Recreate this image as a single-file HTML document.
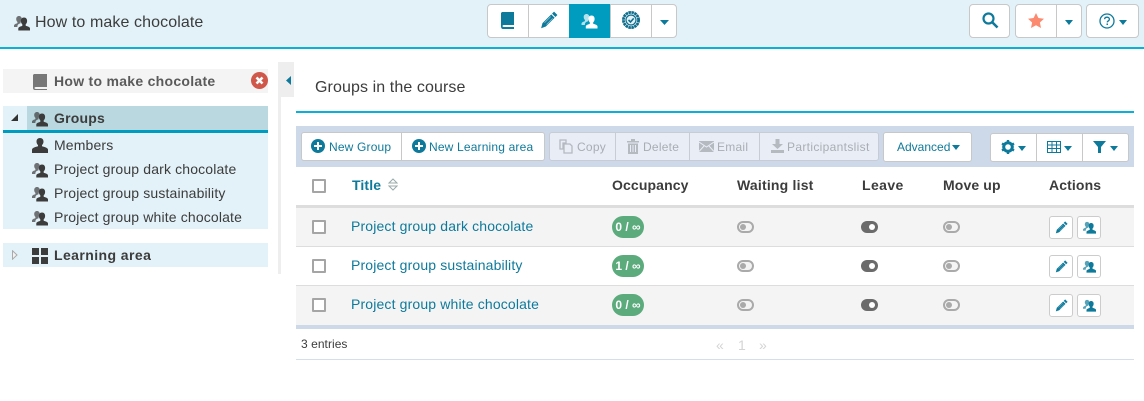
<!DOCTYPE html>
<html><head><meta charset="utf-8"><style>
html,body{margin:0;padding:0;background:#fff}
#p{position:relative;width:1144px;height:401px;overflow:hidden;font-family:"Liberation Sans",sans-serif;color:#3c3c3c;background:#fff}
#p div,#p span.a,#p svg{position:absolute}
.t{white-space:nowrap;line-height:16px}
.btn{background:#fff;border:1px solid #c8c8c8;box-sizing:border-box}
.dis{background:#e9edf6;border:1px solid #c8ccd4;box-sizing:border-box}
.l{color:#0e7a9b}
.tb{font-size:12px;color:#0e7a9b;letter-spacing:.17px}
.td{font-size:12px;color:#a9adb3;letter-spacing:.25px}
.h{font-size:14px;font-weight:bold;letter-spacing:.12px}
.s{font-size:14px;color:#3c3c3c;letter-spacing:.15px}
.r{font-size:14px;color:#0e7a9b;letter-spacing:.15px}
.cb{width:14px;height:14px;box-sizing:border-box;border:2px solid #a5a5a5;background:#fff;border-radius:1px}
.pill{width:32px;height:22px;border-radius:11px;background:#5cab7d;color:#fff;font-size:12px;font-weight:bold;text-align:center;line-height:23px}
.to{width:17px;height:12px;box-sizing:border-box;border:2px solid #aaa;border-radius:6px;background:#f4f4f4}
.to:after{content:"";position:absolute;left:1px;top:1px;width:6px;height:6px;border-radius:50%;background:#aaa}
.on{width:17px;height:12px;border-radius:6px;background:#6b6b6b}
.on:after{content:"";position:absolute;left:8px;top:3px;width:6px;height:6px;border-radius:50%;background:#fff}
.ab{width:24px;height:23px;box-sizing:border-box;border:1px solid #ccc;border-radius:3px;background:#fff}
</style></head><body><div id="p">
<svg width="0" height="0" style="position:absolute"><defs>
<symbol id="grp" viewBox="0 0 16 16"><path d="M5 1c1.700 0 2.800 1.200 2.800 3 0 1.300-.5 2.300-1.200 2.900v1.300c-1.500.4-2.600 1-3 2.100L3.300 12H0v-1.500C.3 9.200 2 8.700 3.400 8.100V6.900C2.700 6.300 2.200 5.300 2.200 4 2.200 2.200 3.300 1 5 1z" opacity=".7"/><path d="M10 2.500c2 0 3.100 1.400 3.100 3.400 0 1.500-.5 2.700-1.400 3.400v1.500c1.500.6 3.800 1 4.300 2.400V15.500H4.300V13.300c.4-1.400 2.500-1.800 4-2.400V9.300C7.400 8.600 6.900 7.400 6.900 5.900 6.900 3.900 8 2.500 10 2.500z"/></symbol>
<symbol id="pen" viewBox="0 0 16 16"><path d="M12.500 .5l3 3-1.800 1.800-3-3zM10 3l3 3-7.800 7.800L1 15.300l1.200-4.500z"/><path d="M4 10.500l5.500-5.500M5.800 12l5.500-5.500" stroke="#fff" stroke-width=".6" opacity=".6"/></symbol>
<symbol id="plus" viewBox="0 0 14 14"><circle cx="7" cy="7" r="7"/><path d="M6 3h2v3h3v2H8v3H6V8H3V6h3z" fill="#fff"/></symbol>
</defs></svg>

<!-- header -->
<div style="left:0;top:0;width:1144px;height:47px;background:#e3f2f8"></div>
<div style="left:0;top:47px;width:1144px;height:2px;background:#0ab0d8"></div>
<svg style="left:14px;top:15px" width="16" height="16" fill="#3c3c3c"><use href="#grp"/></svg>
<div class="t" style="left:35px;top:15px;font-size:16px;letter-spacing:.1px">How to make chocolate</div>

<div class="btn" style="left:487px;top:4px;width:190px;height:34px;border-radius:4px"></div>
<div style="left:528px;top:5px;width:1px;height:32px;background:#c8c8c8"></div>
<div style="left:651px;top:5px;width:1px;height:32px;background:#c8c8c8"></div>
<div style="left:610px;top:5px;width:1px;height:32px;background:#c8c8c8"></div>
<div style="left:569px;top:4px;width:41px;height:34px;background:#009cc0"></div>
<svg style="left:501px;top:12px" width="14" height="17"><path d="M1 0h12v13H3c-1 0-1.500.5-1.500 1s.5 1 1.500 1h10v2H2c-1.200 0-2-1-2-2.500V1z" fill="#0e7a9b"/></svg>
<svg style="left:540px;top:11px" width="18" height="18" fill="#0e7a9b"><use href="#pen"/></svg>
<svg style="left:581px;top:13px" width="17" height="16" fill="#fff"><use href="#grp"/></svg>
<svg style="left:622px;top:11px" width="18" height="18"><circle cx="9" cy="9" r="7.600" fill="none" stroke="#0e6d8c" stroke-width="2.800" stroke-dasharray="2.500 .5"/><circle cx="9" cy="9" r="5" fill="#e3f2f8" stroke="#0e6d8c" stroke-width="1.200"/><path d="M6.500 9l2 2 3.200-3.600" fill="none" stroke="#0e6d8c" stroke-width="1.600"/></svg>
<svg style="left:660px;top:20px" width="9" height="5"><path d="M0 0h9L4.500 5z" fill="#0e7a9b"/></svg>

<div class="btn" style="left:969px;top:4px;width:41px;height:34px;border-radius:4px"></div>
<svg style="left:982px;top:12px" width="17" height="17"><circle cx="6.500" cy="6.500" r="5" fill="none" stroke="#0e7a9b" stroke-width="2.200"/><path d="M10 10l5.500 5.500" stroke="#0e7a9b" stroke-width="2.600"/></svg>
<div class="btn" style="left:1015px;top:4px;width:67px;height:34px;border-radius:4px"></div>
<div style="left:1056px;top:5px;width:1px;height:32px;background:#c8c8c8"></div>
<svg style="left:1028px;top:13px" width="16" height="15"><path d="M8 0l2.400 5 5.600.7-4.100 3.800 1.100 5.500L8 12.300 3 15l1.100-5.500L0 5.700 5.600 5z" fill="#fb8a70"/></svg>
<svg style="left:1065px;top:20px" width="8" height="5"><path d="M0 0h8L4 5z" fill="#0e7a9b"/></svg>
<div class="btn" style="left:1086px;top:4px;width:53px;height:34px;border-radius:4px"></div>
<svg style="left:1099px;top:13px" width="16" height="16"><circle cx="8" cy="8" r="7" fill="none" stroke="#0e7a9b" stroke-width="1.300"/><path d="M5.600 6.200C5.700 4.800 6.700 4.200 8 4.200c1.400 0 2.400.8 2.400 2 0 1.600-2.100 1.600-2.100 3.200" fill="none" stroke="#0e7a9b" stroke-width="1.300"/><rect x="7.500" y="10.500" width="1.500" height="1.500" fill="#0e7a9b"/></svg>
<svg style="left:1119px;top:20px" width="8" height="5"><path d="M0 0h8L4 5z" fill="#0e7a9b"/></svg>

<!-- sidebar -->
<div style="left:3px;top:69px;width:265px;height:24px;background:#f4f4f4"></div>
<svg style="left:33px;top:74px" width="14" height="16"><path d="M1 0h13v13H3c-1 0-1.500.4-1.500 1s.5 1 1.500 1h11v1H2c-1.200 0-2-.8-2-2V1z" fill="#777"/></svg>
<div class="t" style="left:54px;top:73px;font-size:14px;font-weight:bold;color:#5a5a5a;letter-spacing:.28px">How to make chocolate</div>
<svg style="left:251px;top:72px" width="17" height="17"><circle cx="8.500" cy="8.500" r="8.500" fill="#d0584a"/><path d="M5.500 5.500l6 6M11.500 5.500l-6 6" stroke="#fff" stroke-width="2.600"/></svg>

<div style="left:3px;top:106px;width:265px;height:27px;background:#e3f2f8"></div>
<div style="left:27px;top:106px;width:241px;height:24px;background:#b9d8e0"></div>
<div style="left:3px;top:130px;width:265px;height:3px;background:#009cc0"></div>
<svg style="left:11px;top:114px" width="7" height="7"><path d="M7 0v7H0z" fill="#333"/></svg>
<svg style="left:32px;top:111px" width="16" height="16" fill="#3c3c3c"><use href="#grp"/></svg>
<div class="t" style="left:54px;top:110px;font-size:14px;font-weight:bold;letter-spacing:.2px">Groups</div>

<div style="left:3px;top:133px;width:265px;height:96px;background:#e3f2f8"></div>
<svg style="left:32px;top:138px" width="16" height="15"><path d="M8 0c2.200 0 3.500 1.500 3.500 3.600 0 1.500-.7 2.800-1.500 3.400v1.300c2 .6 5.500 1.200 6 3.200V15H0v-3.500c.5-2 4-2.600 6-3.200V7C5.200 6.400 4.500 5.100 4.500 3.600 4.500 1.500 5.800 0 8 0z" fill="#3c3c3c"/></svg>
<div class="t s" style="left:54px;top:137px">Members</div>
<svg style="left:32px;top:162px" width="16" height="16" fill="#3c3c3c"><use href="#grp"/></svg>
<div class="t s" style="left:54px;top:161px">Project group dark chocolate</div>
<svg style="left:32px;top:186px" width="16" height="16" fill="#3c3c3c"><use href="#grp"/></svg>
<div class="t s" style="left:54px;top:185px">Project group sustainability</div>
<svg style="left:32px;top:210px" width="16" height="16" fill="#3c3c3c"><use href="#grp"/></svg>
<div class="t s" style="left:54px;top:209px">Project group white chocolate</div>

<div style="left:3px;top:243px;width:265px;height:24px;background:#e3f2f8"></div>
<svg style="left:12px;top:250px" width="6" height="10"><path d="M.5.800L5 5 .5 9.200z" fill="#f2f2f2" stroke="#aaa"/></svg>
<svg style="left:32px;top:248px" width="16" height="16"><path d="M0 0h7v7H0zM9 0h7v7H9zM0 9h7v7H0zM9 9h7v7H9z" fill="#3c3c3c"/></svg>
<div class="t" style="left:54px;top:247px;font-size:14px;font-weight:bold;letter-spacing:.42px">Learning area</div>

<div style="left:278px;top:62px;width:16px;height:35px;background:#eee"></div>
<div style="left:278px;top:97px;width:3px;height:177px;background:#eee"></div>
<svg style="left:286px;top:76px" width="5" height="9"><path d="M5 0v9L0 4.500z" fill="#0e7a9b"/></svg>

<!-- main -->
<div class="t" style="left:315px;top:80px;font-size:16px;letter-spacing:.1px">Groups in the course</div>
<div style="left:296px;top:111px;width:838px;height:2px;background:#0ab0d8"></div>
<div style="left:296px;top:126px;width:838px;height:41px;background:#cdd9e9"></div>

<div class="btn" style="left:301px;top:132px;width:244px;height:29px;border-radius:3px"></div>
<div style="left:401px;top:133px;width:1px;height:27px;background:#c8c8c8"></div>
<svg style="left:311px;top:139px" width="14" height="14" fill="#0e7a9b"><use href="#plus"/></svg>
<div class="t tb" style="left:329px;top:139px">New Group</div>
<svg style="left:412px;top:139px" width="14" height="14" fill="#0e7a9b"><use href="#plus"/></svg>
<div class="t tb" style="left:429px;top:139px">New Learning area</div>

<div class="dis" style="left:549px;top:132px;width:330px;height:29px;border-radius:3px"></div>
<div style="left:615px;top:133px;width:1px;height:27px;background:#c8ccd4"></div>
<div style="left:689px;top:133px;width:1px;height:27px;background:#c8ccd4"></div>
<div style="left:759px;top:133px;width:1px;height:27px;background:#c8ccd4"></div>
<svg style="left:559px;top:139px" width="15" height="15" fill="none" stroke="#b5b9c0" stroke-width="1.300"><path d="M1 1h6v3H4v6H1z"/><path d="M5 5h6l2 2v7H5z"/></svg>
<div class="t td" style="left:577px;top:139px">Copy</div>
<svg style="left:627px;top:139px" width="12" height="15"><path d="M0 2h12v1.500H0zM4 0h4v2H4zM1 4.500h10V15H1z" fill="#b5b9c0"/><path d="M3.500 6v7M6 6v7M8.500 6v7" stroke="#e9edf6"/></svg>
<div class="t td" style="left:643px;top:139px">Delete</div>
<svg style="left:699px;top:141px" width="15" height="11"><rect width="15" height="11" fill="#b5b9c0"/><path d="M0 1l7.500 5L15 1M0 10.500l5-5.500M15 10.500L10 5" stroke="#e9edf6" fill="none"/></svg>
<div class="t td" style="left:717px;top:139px">Email</div>
<svg style="left:771px;top:139px" width="13" height="14"><path d="M4.500 0h4v5H12L6.500 10 1 5h3.500zM0 11h13v3H0z" fill="#b5b9c0"/></svg>
<div class="t td" style="left:787px;top:139px;letter-spacing:.33px">Participantslist</div>

<div class="btn" style="left:883px;top:132px;width:89px;height:30px;border-radius:3px"></div>
<div class="t tb" style="left:897px;top:139px;letter-spacing:0">Advanced</div>
<svg style="left:952px;top:145px" width="8" height="5"><path d="M0 0h8L4 5z" fill="#0e7a9b"/></svg>

<div class="btn" style="left:990px;top:133px;width:139px;height:29px;border-radius:3px"></div>
<div style="left:1036px;top:134px;width:1px;height:27px;background:#c8c8c8"></div>
<div style="left:1082px;top:134px;width:1px;height:27px;background:#c8c8c8"></div>
<svg style="left:1001px;top:140px" width="14" height="14"><circle cx="7" cy="7" r="4.300" fill="none" stroke="#0e7a9b" stroke-width="3"/><path d="M7 0v14M1 3.500l12 7M13 3.500l-12 7" stroke="#0e7a9b" stroke-width="2.400" stroke-dasharray="2.400 9.200"/></svg>
<svg style="left:1018px;top:146px" width="8" height="5"><path d="M0 0h8L4 5z" fill="#0e7a9b"/></svg>
<svg style="left:1047px;top:141px" width="14" height="12" fill="none" stroke="#0e7a9b"><path d="M.5.500h13v11H.5zM.5 4h13M.5 7.500h13M5 .5v11M9.500.5v11"/></svg>
<svg style="left:1064px;top:146px" width="8" height="5"><path d="M0 0h8L4 5z" fill="#0e7a9b"/></svg>
<svg style="left:1093px;top:141px" width="13" height="12"><path d="M0 0h13L8 6v6H5V6z" fill="#0e7a9b"/></svg>
<svg style="left:1110px;top:146px" width="8" height="5"><path d="M0 0h8L4 5z" fill="#0e7a9b"/></svg>

<!-- table head -->
<div class="cb" style="left:312px;top:179px"></div>
<div class="t h l" style="left:352px;top:177px">Title</div>
<svg style="left:388px;top:178px" width="10" height="13" fill="none" stroke="#9aa"><path d="M1 5l4-4 4 4zM1 8l4 4 4-4z"/></svg>
<div class="t h" style="left:612px;top:177px">Occupancy</div>
<div class="t h" style="left:737px;top:177px;letter-spacing:.2px">Waiting list</div>
<div class="t h" style="left:862px;top:177px;letter-spacing:.4px">Leave</div>
<div class="t h" style="left:943px;top:177px">Move up</div>
<div class="t h" style="left:1049px;top:177px">Actions</div>

<!-- rows -->
<div style="left:296px;top:205px;width:838px;height:3px;background:#ddd"></div>
<div style="left:296px;top:208px;width:838px;height:38px;background:#f4f4f4"></div>
<div style="left:296px;top:246px;width:838px;height:1px;background:#ddd"></div>
<div style="left:296px;top:285px;width:838px;height:1px;background:#ddd"></div>
<div style="left:296px;top:286px;width:838px;height:39px;background:#f4f4f4"></div>
<div style="left:296px;top:325px;width:838px;height:4px;background:#cdd9e9"></div>

<div class="cb" style="left:312px;top:220px"></div>
<div class="t r" style="left:351px;top:218px">Project group dark chocolate</div>
<div class="pill" style="left:612px;top:216px">0 / ∞</div>
<div class="to" style="left:737px;top:221px"></div>
<div class="on" style="left:861px;top:221px"></div>
<div class="to" style="left:943px;top:221px"></div>
<div class="ab" style="left:1049px;top:216px"></div>
<svg style="left:1055px;top:221px" width="13" height="13" fill="#0e7a9b"><use href="#pen"/></svg>
<div class="ab" style="left:1077px;top:216px"></div>
<svg style="left:1083px;top:221px" width="13" height="13" fill="#0e7a9b"><use href="#grp"/></svg>

<div class="cb" style="left:312px;top:259px"></div>
<div class="t r" style="left:351px;top:257px">Project group sustainability</div>
<div class="pill" style="left:612px;top:255px">1 / ∞</div>
<div class="to" style="left:737px;top:260px"></div>
<div class="on" style="left:861px;top:260px"></div>
<div class="to" style="left:943px;top:260px"></div>
<div class="ab" style="left:1049px;top:255px"></div>
<svg style="left:1055px;top:260px" width="13" height="13" fill="#0e7a9b"><use href="#pen"/></svg>
<div class="ab" style="left:1077px;top:255px"></div>
<svg style="left:1083px;top:260px" width="13" height="13" fill="#0e7a9b"><use href="#grp"/></svg>

<div class="cb" style="left:312px;top:298px"></div>
<div class="t r" style="left:351px;top:296px">Project group white chocolate</div>
<div class="pill" style="left:612px;top:294px">0 / ∞</div>
<div class="to" style="left:737px;top:299px"></div>
<div class="on" style="left:861px;top:299px"></div>
<div class="to" style="left:943px;top:299px"></div>
<div class="ab" style="left:1049px;top:294px"></div>
<svg style="left:1055px;top:299px" width="13" height="13" fill="#0e7a9b"><use href="#pen"/></svg>
<div class="ab" style="left:1077px;top:294px"></div>
<svg style="left:1083px;top:299px" width="13" height="13" fill="#0e7a9b"><use href="#grp"/></svg>

<div class="t" style="left:301px;top:336px;font-size:12px;letter-spacing:.05px">3 entries</div>
<div class="t" style="left:716px;top:337px;font-size:14px;color:#d4d4d4">«</div>
<div class="t" style="left:738px;top:337px;font-size:14px;color:#d4d4d4">1</div>
<div class="t" style="left:759px;top:337px;font-size:14px;color:#d4d4d4">»</div>
<div style="left:296px;top:359px;width:838px;height:1px;background:#d5deeb"></div>
</div></body></html>
